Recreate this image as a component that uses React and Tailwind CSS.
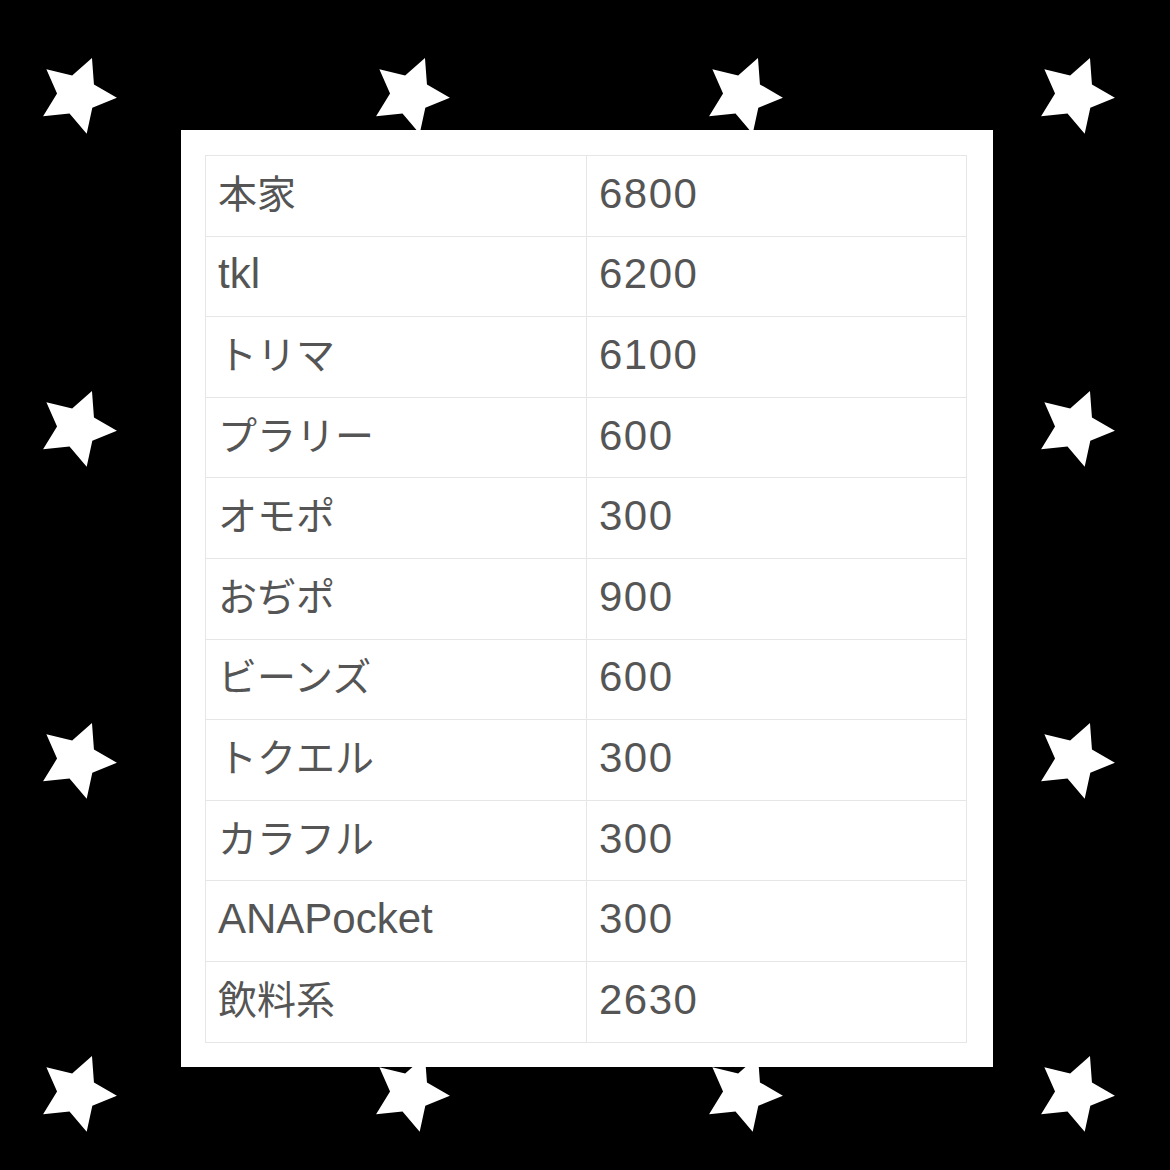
import React from 'react';

const rows = [
  ['本家', '6800'],
  ['tkl', '6200'],
  ['トリマ', '6100'],
  ['プラリー', '600'],
  ['オモポ', '300'],
  ['おぢポ', '900'],
  ['ビーンズ', '600'],
  ['トクエル', '300'],
  ['カラフル', '300'],
  ['ANAPocket', '300'],
  ['飲料系', '2630'],
];

// star centres on the black frame (the middle ones sit under the card)
const starX = [77, 410, 743, 1075];
const starY = [95, 428, 760, 1093];

const starPoints = (() => {
  const pts = [];
  for (let i = 0; i < 10; i++) {
    const r = i % 2 === 0 ? 40 : 20;
    const a = ((22 + i * 36) * Math.PI) / 180;
    pts.push(`${(40 + r * Math.sin(a)).toFixed(2)},${(40 - r * Math.cos(a)).toFixed(2)}`);
  }
  return pts.join(' ');
})();

const Star = ({ x, y }) => (
  <svg
    className="absolute"
    style={{ left: x - 40, top: y - 40 }}
    width="80"
    height="80"
    viewBox="0 0 80 80"
  >
    <polygon points={starPoints} fill="#ffffff" />
  </svg>
);

const isLatin = (s) => /^[A-Za-z0-9]+$/.test(s);

export default function App() {
  return (
    <div className="relative w-[1170px] h-[1170px] bg-black overflow-hidden">
      {starY.map((y) => starX.map((x) => <Star key={`${x}-${y}`} x={x} y={y} />))}

      <div className="relative z-10 pt-[130px] pl-[181px]">
        <div className="w-[812px] h-[937px] bg-white pt-[25px] pl-[24px] pr-[26px]">
          <table
            className="w-[762px] border-collapse text-[#555555] text-[42px]"
            style={{ fontFamily: '"Liberation Sans", "Noto Sans CJK JP", sans-serif' }}
          >
            <tbody>
              {rows.map(([name, value]) => (
                <tr key={name} className="h-[80.6px]">
                  <td className="w-[381px] border border-[#e6e6e6] pl-[12px] pb-[4px] leading-none align-middle">
                    <span className={isLatin(name) ? 'text-[42px]' : 'text-[39px]'}>{name}</span>
                  </td>
                  <td className="border border-[#e6e6e6] pl-[12px] pb-[4px] leading-none align-middle tracking-[1.5px]">
                    {value}
                  </td>
                </tr>
              ))}
            </tbody>
          </table>
        </div>
      </div>
    </div>
  );
}
